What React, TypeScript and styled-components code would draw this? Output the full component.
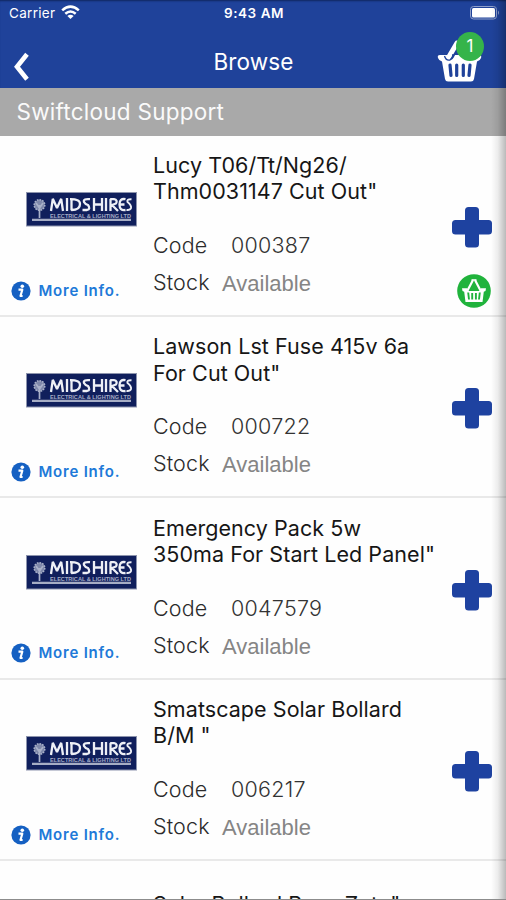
import React from 'react';
import styled, { createGlobalStyle } from 'styled-components';

const GlobalStyle = createGlobalStyle`
  * { box-sizing: border-box; }
  body { margin: 0; background: #fff; overflow: hidden; }
`;

const Screen = styled.main`
  position: relative;
  display: flex;
  flex-direction: column;
  width: 506px;
  height: 900px;
  overflow: hidden;
  background: #fefefe;
  font-family: Inter, "Liberation Sans", sans-serif;
`;

const EdgeShade = styled.div`
  position: absolute;
  inset: 0 0 0 auto;
  width: 15px;
  background: linear-gradient(to right, rgba(0, 0, 0, 0), rgba(0, 0, 0, 0.07) 45%, rgba(0, 0, 0, 0.27));
  pointer-events: none;
`;

const BottomEdge = styled.div`
  position: absolute;
  inset: auto 0 0 0;
  height: 1px;
  background: #8c8c8c;
`;

const Header = styled.header`
  flex: none;
  height: 88px;
  background: #1f429a;
  color: #fff;
  box-shadow: inset 0 2px 2px -1px #10265f;
`;

const StatusBar = styled.div`
  display: grid;
  grid-template-columns: 1fr auto 1fr;
  align-items: center;
  height: 27px;
  padding: 0 6px 0 9px;
  font-size: 13px;
  line-height: 27px;
`;

const Carrier = styled.span`
  display: flex;
  align-items: center;
  gap: 6px;
  font-size: 13.5px;
  letter-spacing: 0.3px;
  svg { margin-top: -2px; }
`;

const Time = styled.span`
  font-size: 13.5px;
  font-weight: 600;
  letter-spacing: 0.55px;
  margin-right: 1px;
`;

const Battery = styled.svg`
  justify-self: end;
  margin-top: -1px;
`;

const NavBar = styled.div`
  display: grid;
  grid-template-columns: 100px 1fr 100px;
  height: 61px;
`;

const BackButton = styled.button`
  width: 40px;
  margin: 25px 0 0 12px;
  padding: 0;
  height: 30px;
  border: 0;
  background: none;
  text-align: left;
`;

const Title = styled.h1`
  margin: 20.5px 0 0 1px;
  font-size: 22.5px;
  line-height: 27px;
  font-weight: 400;
  letter-spacing: 0.1px;
  text-align: center;
`;

const CartButton = styled.div`
  position: relative;
  width: 50px;
  height: 52px;
  margin: 4px 0 0 31px;
`;

const CartBadge = styled.span`
  position: absolute;
  top: 1px;
  left: 19px;
  width: 28px;
  height: 29px;
  border-radius: 50%;
  background: #35b44a;
  font-size: 17px;
  line-height: 29px;
  text-align: center;
`;

const SectionBar = styled.h2`
  flex: none;
  height: 47.5px;
  margin: 0;
  padding-left: 16.5px;
  background: #a9a9a9;
  color: #fafafa;
  font-size: 22.5px;
  line-height: 48px;
  font-weight: 400;
  letter-spacing: 0.25px;
`;

const List = styled.ul`
  margin: 0;
  padding: 0;
  list-style: none;
`;

const Row = styled.li`
  display: grid;
  grid-template-columns: 153px 1fr 60px;
  height: 181.4px;
  border-bottom: 2px solid #e9e9e9;
`;

const Brand = styled.div`
  display: flex;
  flex-direction: column;
  padding-top: 56.5px;
`;

const Logo = styled.svg`
  display: block;
  margin-left: 26px;
`;

const MoreInfo = styled.a`
  display: flex;
  align-items: center;
  gap: 7.5px;
  margin: 53.7px 0 0 11px;
  color: #2079d8;
  font-size: 15px;
  line-height: 20px;
  font-weight: 600;
  letter-spacing: 0.78px;
  white-space: nowrap;
`;

const Details = styled.div`
  display: flex;
  flex-direction: column;
  padding-top: 16.5px;
`;

const ProductName = styled.h3`
  display: flex;
  align-items: center;
  height: 52.6px;
  margin: 0 0 27.4px;
  color: #161616;
  font-size: 21.5px;
  line-height: 26.3px;
  font-weight: 400;
  letter-spacing: 0.06px;
  white-space: pre;
`;

const Field = styled.div`
  display: flex;
  height: 37px;
  font-size: 21.5px;
  line-height: 27px;
  font-weight: 300;
  color: #2b2b2b;
`;

const Label = styled.span<{ $width: number }>`
  width: ${(p) => p.$width}px;
  letter-spacing: 0.15px;
`;

const Code = styled.span`
  letter-spacing: 0.25px;
  color: #333;
`;

const Stock = styled.span`
  padding-top: 1px;
  font-family: "Liberation Sans", Arial, sans-serif;
  font-size: 22px;
  font-weight: 400;
  color: #858585;
`;

const Actions = styled.div`
  display: flex;
  flex-direction: column;
  gap: 26px;
  padding: 70.4px 0 0 4.5px;
`;

const InCart = styled.svg`
  margin-left: 6px;
`;

const WifiIcon = () => (
  <svg width="19" height="15" viewBox="0 0 19 15" fill="none" stroke="#fff" strokeWidth="2.5">
    <path d="M1.2 5.4 Q9.5 -2.2 17.8 5.4" />
    <path d="M4.3 8.8 Q9.5 4.2 14.7 8.8" />
    <path d="M9.5 14 L6.4 10.9 Q9.5 8.4 12.6 10.9 Z" fill="#fff" stroke="none" />
  </svg>
);

const BackIcon = () => (
  <svg width="18" height="30" viewBox="0 0 18 30" fill="none" stroke="#fff" strokeWidth="4.6">
    <path d="M15 2.2 L5 14.8 L15 27.2" />
  </svg>
);

const BasketIcon = () => (
  <svg width="46" height="52" viewBox="0 0 46 52">
    <path d="M1 27 Q0 24 3 24 H42 Q45 24 44 27 Q43 30 40 30.5 L37 48 Q36.500 50.500 34 50.500 H11 Q8.500 50.500 8 48 L5 30.500 Q2 30 1 27 Z" fill="#fff" />
    <path d="M13.500 25 L20 13" stroke="#1f429a" strokeWidth="7" strokeLinecap="round" />
    <path d="M11.500 26.500 L20 12" stroke="#fff" strokeWidth="5" strokeLinecap="round" />
    <path d="M7.500 25 Q9 30 13 29 Q16 27 16 23" fill="none" stroke="#1f429a" strokeWidth="1.300" />
    <path d="M13 34 L14 44.500 M19.700 34 V44.500 M26.300 34 V44.500 M33 34 L32 44.500" stroke="#1f429a" strokeWidth="3.200" strokeLinecap="round" />
  </svg>
);

const InfoIcon = () => (
  <svg width="20" height="20" viewBox="0 0 20 20">
    <circle cx="10" cy="10" r="9.600" fill="#1560c2" />
    <circle cx="11.300" cy="5.200" r="1.800" fill="#fff" />
    <path d="M7.500 8.700 H11.300 L9.500 15 H11.600" fill="none" stroke="#fff" strokeWidth="2.200" strokeLinejoin="round" />
  </svg>
);

const PlusIcon = () => (
  <svg width="42" height="42" viewBox="0 0 42 42" fill="#1e42a0">
    <rect x="14" y="1" width="14" height="40.500" rx="3.500" />
    <rect x="1" y="14" width="40" height="14.500" rx="3.500" />
  </svg>
);

const InCartIcon = () => (
  <InCart width="34" height="34" viewBox="0 0 34 34">
    <circle cx="17" cy="17" r="16.800" fill="#20b33c" />
    <path d="M11 15.500 L15.500 7 M23 15.500 L18.500 7" stroke="#fff" strokeWidth="2.200" strokeLinecap="round" />
    <path d="M14.500 6 H19.500" stroke="#fff" strokeWidth="1.600" />
    <path d="M5 14.300 H10 L12 17 H22 L24 14.300 H29 L28.500 17 L26.800 17.800 L25.500 28 H8.500 L7.200 17.800 L5.500 17 Z" fill="#fff" />
    <path d="M11.200 18.500 L12 25.500 M15.200 19 V25.500 M18.900 19 V25.500 M22.800 18.500 L22 25.500" stroke="#20b33c" strokeWidth="1.900" />
  </InCart>
);

const SupplierLogo = () => (
  <Logo width="111" height="35" viewBox="0 0 111 35">
    <rect x="0.500" y="0.500" width="110" height="33.500" fill="#101f5c" stroke="#8d94ad" />
    <g stroke="#a9b1c9" fill="none">
      <circle cx="13.500" cy="13" r="5.300" fill="#7e88aa" strokeWidth="1.500" strokeDasharray="1.700 1" />
      <path d="M13.500 26 V13 M10 11 L13.500 16 L17 11" strokeWidth="1.700" />
      <path d="M6 27.800 H105" stroke="#a6adc4" strokeWidth="2.200" />
    </g>
    <g fill="none" stroke="#eef0f6" strokeWidth="2.300" strokeLinejoin="bevel">
      <path d="M25 19 L26.800 6.800 L31 16 L35.200 6.800 L37 19" />
      <path d="M41 6 V19" />
      <path d="M45.500 7 V18 Q54 18 54 12 Q54 7 44 7.200" />
      <path d="M64 7.200 Q57 6.500 58 10 Q59 12 62 13 Q65 17 61 18 H56.500" />
      <path d="M68 6 V19 M76 6 V19 M68 12.500 H76" />
      <path d="M80 6 V19" />
      <path d="M84.500 19 V7.200 H88 Q92 8 90 11.500 L86 13 L92 19" />
      <path d="M99.500 7.200 Q93.500 6 93.500 12.500 Q93.500 19 99.500 18 M93.500 12.500 H98.500" />
      <path d="M105.500 7.200 Q100.500 7 101.500 10 Q105.500 13 105 16 Q104 18.500 100.500 18" strokeWidth="2" />
    </g>
    <text x="24" y="25.500" fill="#a5adc6" fontFamily="Liberation Sans" fontSize="5.800" fontWeight="700" textLength="81" lengthAdjust="spacingAndGlyphs">ELECTRICAL &amp; LIGHTING LTD</text>
  </Logo>
);

interface Product {
  name: string;
  code: string;
  inCart?: boolean;
}

const products: Product[] = [
  { name: 'Lucy T06/Tt/Ng26/\nThm0031147 Cut Out"', code: '000387', inCart: true },
  { name: 'Lawson Lst Fuse 415v 6a\nFor Cut Out"', code: '000722' },
  { name: 'Emergency Pack 5w\n350ma For Start Led Panel"', code: '0047579' },
  { name: 'Smatscape Solar Bollard\nB/M "', code: '006217' },
  { name: 'Solar Bollard Base Zeta"', code: '006218' },
];

const ProductRow = ({ product }: { product: Product }) => (
  <Row>
    <Brand>
      <SupplierLogo />
      <MoreInfo><InfoIcon />More Info.</MoreInfo>
    </Brand>
    <Details>
      <ProductName>{product.name}</ProductName>
      <Field><Label $width={78}>Code</Label><Code>{product.code}</Code></Field>
      <Field><Label $width={69}>Stock</Label><Stock>Available</Stock></Field>
    </Details>
    <Actions>
      <PlusIcon />
      {product.inCart && <InCartIcon />}
    </Actions>
  </Row>
);

export default function App() {
  return (
    <Screen>
      <GlobalStyle />
      <Header>
        <StatusBar>
          <Carrier>Carrier <WifiIcon /></Carrier>
          <Time>9:43 AM</Time>
          <Battery width="30" height="14" viewBox="0 0 30 14">
            <rect x="0.500" y="0.500" width="26" height="12.500" rx="3" fill="none" stroke="#8f9fca" />
            <rect x="2" y="2" width="23" height="9.500" rx="1.500" fill="#fff" />
            <path d="M28 4.500 Q30 6.700 28 9 Z" fill="#8f9fca" />
          </Battery>
        </StatusBar>
        <NavBar>
          <BackButton aria-label="Back"><BackIcon /></BackButton>
          <Title>Browse</Title>
          <CartButton><BasketIcon /><CartBadge>1</CartBadge></CartButton>
        </NavBar>
      </Header>
      <SectionBar>Swiftcloud Support</SectionBar>
      <List>
        {products.map((p) => <ProductRow key={p.code} product={p} />)}
      </List>
      <EdgeShade />
      <BottomEdge />
    </Screen>
  );
}
